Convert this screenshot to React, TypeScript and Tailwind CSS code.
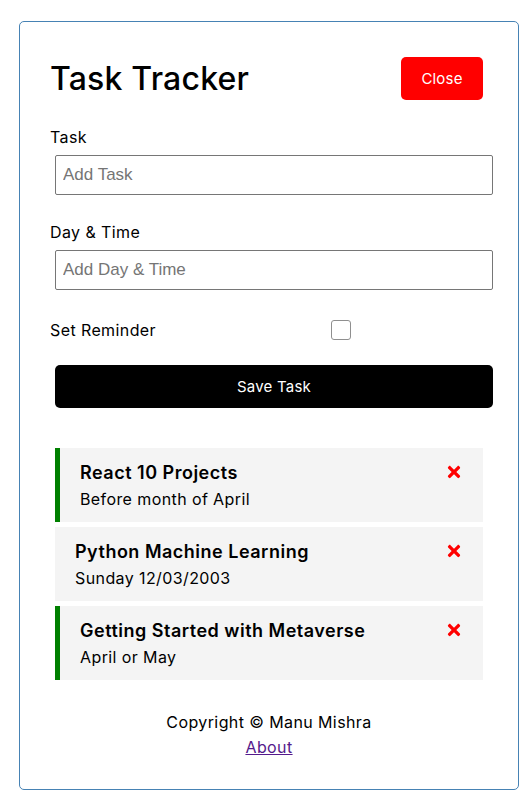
import React from "react";
import { FaTimes } from "react-icons/fa";

const tasks = [
  { id: 1, text: "React 10 Projects", day: "Before month of April", reminder: true },
  { id: 2, text: "Python Machine Learning", day: "Sunday 12/03/2003", reminder: false },
  { id: 3, text: "Getting Started with Metaverse", day: "April or May", reminder: true },
];

export default function App() {
  return (
    <div className="min-h-[806px] bg-white pt-[21px] text-black" style={{ fontFamily: "Inter, 'Noto Sans', sans-serif" }}>
      <div className="ml-[19px] w-[500px] rounded-[5px] border border-[#4682b4] p-[30px]">
        <header className="mb-[20px] flex h-[53px] items-center justify-between">
          <h1 className="text-[32px] font-medium leading-[40px] tracking-[0.2px]">Task Tracker</h1>
          <button className="m-[5px] flex h-[43px] w-[82px] items-center justify-center rounded-[5px] bg-[#ff0000] pt-[2px] text-[15px] tracking-[0.2px] text-white">
            Close
          </button>
        </header>

        <form onSubmit={(e) => e.preventDefault()}>
          <label className="block h-[25px] text-[16px] leading-[25px] tracking-[0.4px]">Task</label>
          <input
            type="text"
            placeholder="Add Task"
            className="ml-[5px] mt-[5px] block h-[40px] w-[438px] rounded-[2px] border border-[#767676] px-[7px] text-[17px] placeholder:text-[#757575]"
            style={{ fontFamily: "'Liberation Sans', Arial, sans-serif" }}
          />
          <label className="mt-[25px] block h-[25px] text-[16px] leading-[25px] tracking-[0.4px]">Day &amp; Time</label>
          <input
            type="text"
            placeholder="Add Day & Time"
            className="ml-[5px] mt-[5px] block h-[40px] w-[438px] rounded-[2px] border border-[#767676] px-[7px] text-[17px] placeholder:text-[#757575]"
            style={{ fontFamily: "'Liberation Sans', Arial, sans-serif" }}
          />
          <div className="mt-[28px] flex h-[24px] items-center">
            <label className="w-[281px] text-[16px] leading-[24px] tracking-[0.4px]">Set Reminder</label>
            <span className="block h-[20px] w-[20px] rounded-[3px] border border-[#8f8f8f] bg-white" />
          </div>
          <button className="ml-[5px] mt-[23px] flex h-[43px] w-[438px] items-center justify-center rounded-[5px] bg-black pt-[2px] text-[15px] tracking-[0.2px] text-white">
            Save Task
          </button>
        </form>

        <div className="mt-[40px] flex flex-col gap-[5px]">
          {tasks.map((t) => (
            <div
              key={t.id}
              className={
                t.reminder
                  ? "ml-[5px] h-[74px] w-[428px] border-l-[5px] border-[#008000] bg-[#f4f4f4] px-5 py-[10px]"
                  : "ml-[5px] h-[74px] w-[428px] bg-[#f4f4f4] px-5 py-[10px]"
              }
            >
              <h3 className="flex h-[28px] items-center justify-between text-[18px] font-semibold leading-[28px] tracking-[0.5px]">
                <span className="pt-[2px]">{t.text}</span>
                <FaTimes className="text-[#ff0000]" style={{ fontSize: 18 }} />
              </h3>
              <p className="h-[26px] text-[16px] leading-[26px] tracking-[0.4px]">{t.day}</p>
            </div>
          ))}
        </div>

        <footer className="mt-[30px] text-center text-[16px] leading-[24px] tracking-[0.4px]">
          <p className="h-[24px]">Copyright &copy; Manu Mishra</p>
          <a href="#about" className="mt-px inline-block text-[#551a8b] underline">
            About
          </a>
        </footer>
      </div>
    </div>
  );
}
